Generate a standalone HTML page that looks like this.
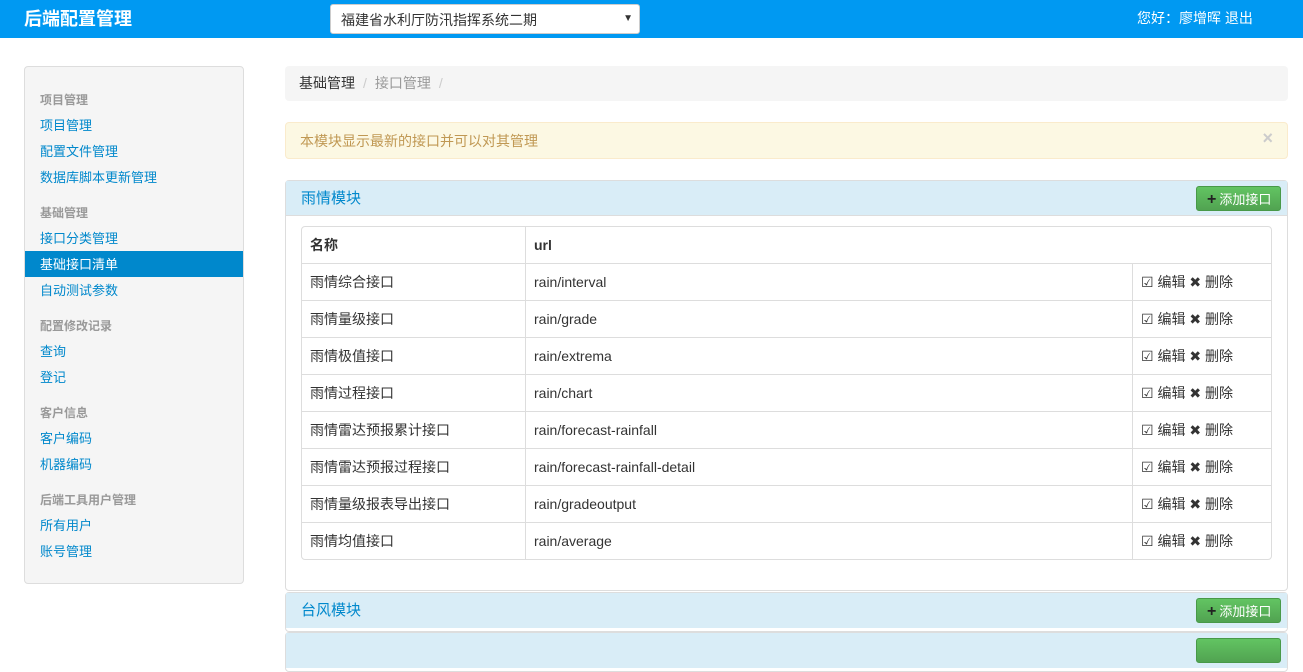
<!DOCTYPE html>
<html><head><meta charset="utf-8"><style>
*{box-sizing:border-box;margin:0;padding:0}
body{width:1303px;height:639px;overflow:hidden;background:#fff;font-family:"Liberation Sans","Noto Sans CJK SC",sans-serif;font-size:14px;color:#333;position:relative}
.nav{position:absolute;left:0;top:0;width:1303px;height:38px;background:#0099f2}
.brand{position:absolute;left:24px;top:5px;color:#fff;font-size:18px;font-weight:bold}
.sel{position:absolute;left:330px;top:4px;width:310px;height:30px;background:#fff;border:1px solid #ccc;border-radius:3px;font-size:14px;padding:5px 10px;color:#333}
.sel span{position:absolute;right:6px;top:8px;font-size:10px}
.user{position:absolute;left:1137px;top:8px;color:#fff;font-size:14px}
.side{position:absolute;left:24px;top:66px;width:220px;height:518px;background:#f5f5f5;border:1px solid #ddd;border-radius:4px}
.side div{position:absolute;left:15px;font-size:13px;margin-top:-2px}
.side .h{color:#999;font-weight:bold;font-size:12px}
.side .l{color:#08c}
.side .act{left:0;width:218px;height:26px;background:#0088cc;color:#fff;padding:3px 15px;margin-top:0}
.bc{position:absolute;left:285px;top:66px;width:1003px;height:35px;background:#f5f5f5;border-radius:4px;padding:7px 14px;font-size:14px}
.bc .s{color:#ccc;margin:0 8px}.bc .g{color:#999}
.alert{position:absolute;left:285px;top:122px;width:1003px;height:37px;background:#fcf8e3;border:1px solid #faebcc;border-radius:4px;color:#c09853;padding:8px 14px}
.alert b{position:absolute;right:14px;top:5px;color:#ccc;font-size:18px}
.panel{position:absolute;left:285px;width:1003px;border:1px solid #ddd;border-radius:4px;background:#fff}
.ph{height:35px;background:#d9edf7;color:#08c;padding:6px 15px;font-size:15px;position:relative;border-bottom:1px solid #ddd}
.btn{position:absolute;right:6px;top:5px;width:85px;height:25px;background:linear-gradient(#62c462,#51a351);border:1px solid #489948;border-radius:3px;color:#fff;font-size:13px;padding:2px 0 0 10px}
.btn i{font-style:normal;color:#222;font-weight:bold;font-size:16px;margin-right:3px}
table{position:absolute;left:15px;top:45px;width:971px;border-collapse:separate;border-spacing:0;border:1px solid #ddd;border-radius:4px}
td{height:37px;border-top:1px solid #ddd;padding:0 8px;font-size:14px}
tr:first-child td{border-top:0;font-weight:bold;height:36px}
td+td{border-left:1px solid #ddd}
</style></head><body>
<div class="nav"><div class="brand">后端配置管理</div>
<div class="sel">福建省水利厅防汛指挥系统二期<span>▼</span></div>
<div class="user">您好：廖增晖 退出</div></div>
<div class="side">
<div class="h" style="top:26px">项目管理</div>
<div class="l" style="top:50px">项目管理</div>
<div class="l" style="top:76px">配置文件管理</div>
<div class="l" style="top:102px">数据库脚本更新管理</div>
<div class="h" style="top:139px">基础管理</div>
<div class="l" style="top:163px">接口分类管理</div>
<div class="act" style="top:184px">基础接口清单</div>
<div class="l" style="top:215px">自动测试参数</div>
<div class="h" style="top:252px">配置修改记录</div>
<div class="l" style="top:276px">查询</div>
<div class="l" style="top:302px">登记</div>
<div class="h" style="top:339px">客户信息</div>
<div class="l" style="top:363px">客户编码</div>
<div class="l" style="top:389px">机器编码</div>
<div class="h" style="top:426px">后端工具用户管理</div>
<div class="l" style="top:450px">所有用户</div>
<div class="l" style="top:476px">账号管理</div>
</div>
<div class="bc">基础管理<span class="s">/</span><span class="g">接口管理</span><span class="s">/</span></div>
<div class="alert">本模块显示最新的接口并可以对其管理<b>×</b></div>
<div class="panel" style="top:180px;height:411px">
<div class="ph">雨情模块<div class="btn"><i>+</i>添加接口</div></div>
<table>
<tr><td style="width:223px">名称</td><td colspan="2">url</td></tr>
<tr><td>雨情综合接口</td><td style="width:607px">rain/interval</td><td>☑ 编辑 ✖ 删除</td></tr>
<tr><td>雨情量级接口</td><td>rain/grade</td><td>☑ 编辑 ✖ 删除</td></tr>
<tr><td>雨情极值接口</td><td>rain/extrema</td><td>☑ 编辑 ✖ 删除</td></tr>
<tr><td>雨情过程接口</td><td>rain/chart</td><td>☑ 编辑 ✖ 删除</td></tr>
<tr><td>雨情雷达预报累计接口</td><td>rain/forecast-rainfall</td><td>☑ 编辑 ✖ 删除</td></tr>
<tr><td>雨情雷达预报过程接口</td><td>rain/forecast-rainfall-detail</td><td>☑ 编辑 ✖ 删除</td></tr>
<tr><td>雨情量级报表导出接口</td><td>rain/gradeoutput</td><td>☑ 编辑 ✖ 删除</td></tr>
<tr><td>雨情均值接口</td><td>rain/average</td><td>☑ 编辑 ✖ 删除</td></tr>
</table>
</div>
<div class="panel" style="top:592px;height:40px"><div class="ph" style="border:0">台风模块<div class="btn"><i>+</i>添加接口</div></div></div>
<div class="panel" style="top:632px;height:40px"><div class="ph" style="border:0"><div class="btn"></div></div></div>
</body></html>
